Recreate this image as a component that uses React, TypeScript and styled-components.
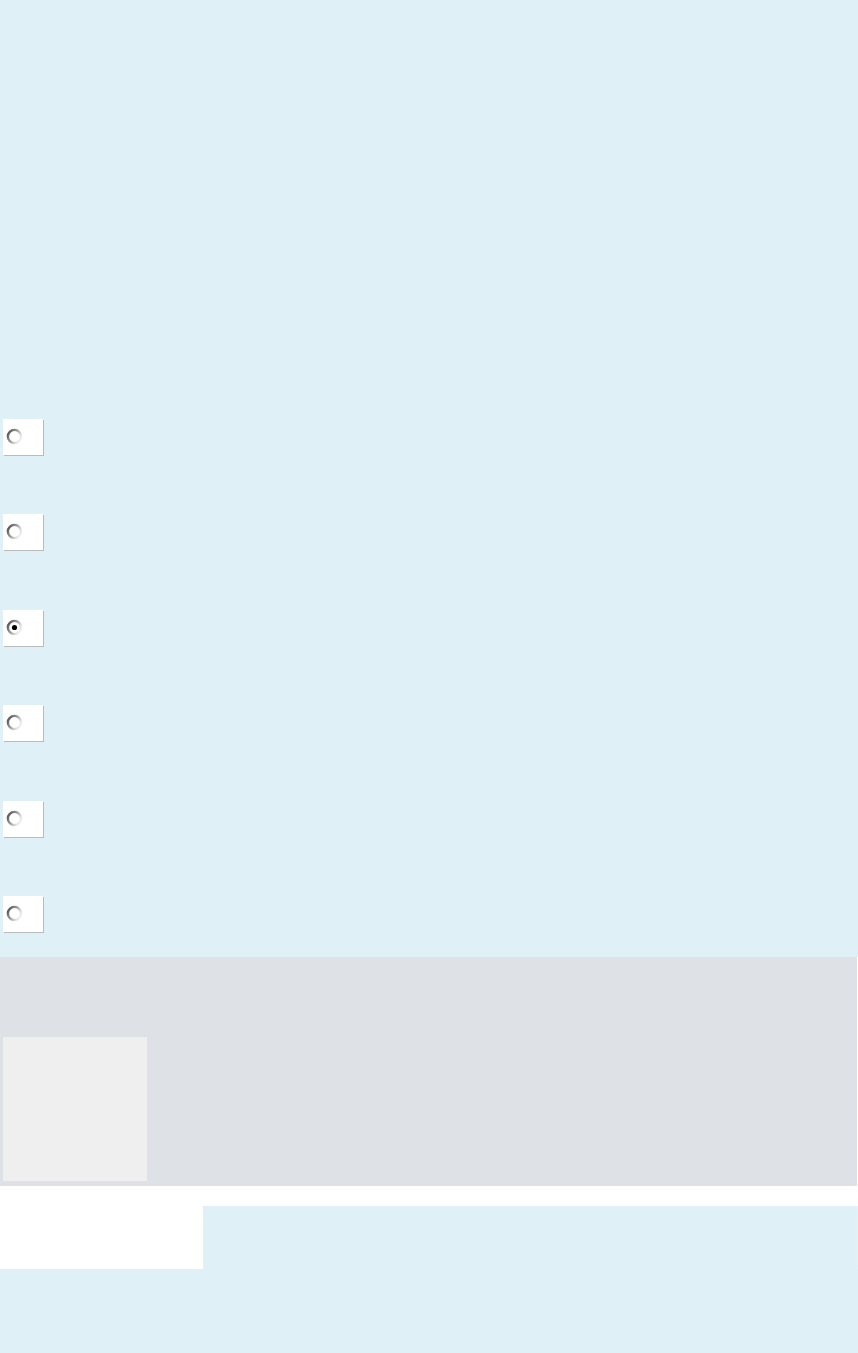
import {FC} from 'react';
import styled, {createGlobalStyle} from 'styled-components';

const GlobalStyle = createGlobalStyle`
    html, body {
        margin: 0;
        padding: 0;
        background: #ffffff;
        font-family: "Liberation Sans", Arial, sans-serif;
    }
`;

const Page = styled.div`
    width: 858px;
    display: flex;
    flex-direction: column;
`;

const ChoicePanel = styled.div`
    height: 957px;
    box-sizing: border-box;
    padding: 419px 0 0 3px;
    background: #dff1f7;
`;

const ChoiceRow = styled.div`
    height: 95.4px;
`;

const ChoiceBox = styled.label`
    width: 40px;
    height: 36px;
    display: flex;
    align-items: flex-start;
    padding: 9px 0 0 3px;
    box-sizing: border-box;
    background: #ffffff;
    box-shadow: 1px 1px 0 #b9bcbe;
    cursor: pointer;
`;

const GreyPanel = styled.div`
    width: 857px;
    height: 229px;
    box-sizing: border-box;
    padding: 80px 0 0 3px;
    background: #dee1e6;
`;

const Tile = styled.div`
    width: 144px;
    height: 144px;
    background: #efefef;
`;

const StripRow = styled.div`
    display: grid;
    grid-template-columns: 203px 1fr;
    height: 83px;
    background: #ffffff;
`;

const StripFill = styled.div`
    margin-top: 20px;
    background: #dff1f7;
    border-right: 1px solid #e6f3f8;
`;

const Footer = styled.div`
    height: 84px;
    background: #dff1f7;
`;

const Radio: FC<{checked?: boolean}> = ({checked}) => (
    <svg width="17" height="17" viewBox="0 0 17 17">
        <defs>
            <linearGradient id="ring" x1="0" y1="0.2" x2="1" y2="0.8">
                <stop offset="0" stopColor="#555555" />
                <stop offset="0.45" stopColor="#a0a0a0" />
                <stop offset="0.8" stopColor="#e4e4e4" />
                <stop offset="1" stopColor="#f4f4f4" />
            </linearGradient>
        </defs>
        <circle cx="8.5" cy="8.5" r="6.6" fill="#ffffff" stroke="url(#ring)" strokeWidth="2.4" />
        {checked && <circle cx="8.5" cy="8.5" r="2.6" fill="#000000" />}
    </svg>
);

const options = [false, false, true, false, false, false];

export default function App() {
    return (
        <Page>
            <GlobalStyle />
            <ChoicePanel>
                {options.map((checked, i) => (
                    <ChoiceRow key={i}>
                        <ChoiceBox>
                            <Radio checked={checked} />
                        </ChoiceBox>
                    </ChoiceRow>
                ))}
            </ChoicePanel>
            <GreyPanel>
                <Tile />
            </GreyPanel>
            <StripRow>
                <div />
                <StripFill />
            </StripRow>
            <Footer />
        </Page>
    );
}
